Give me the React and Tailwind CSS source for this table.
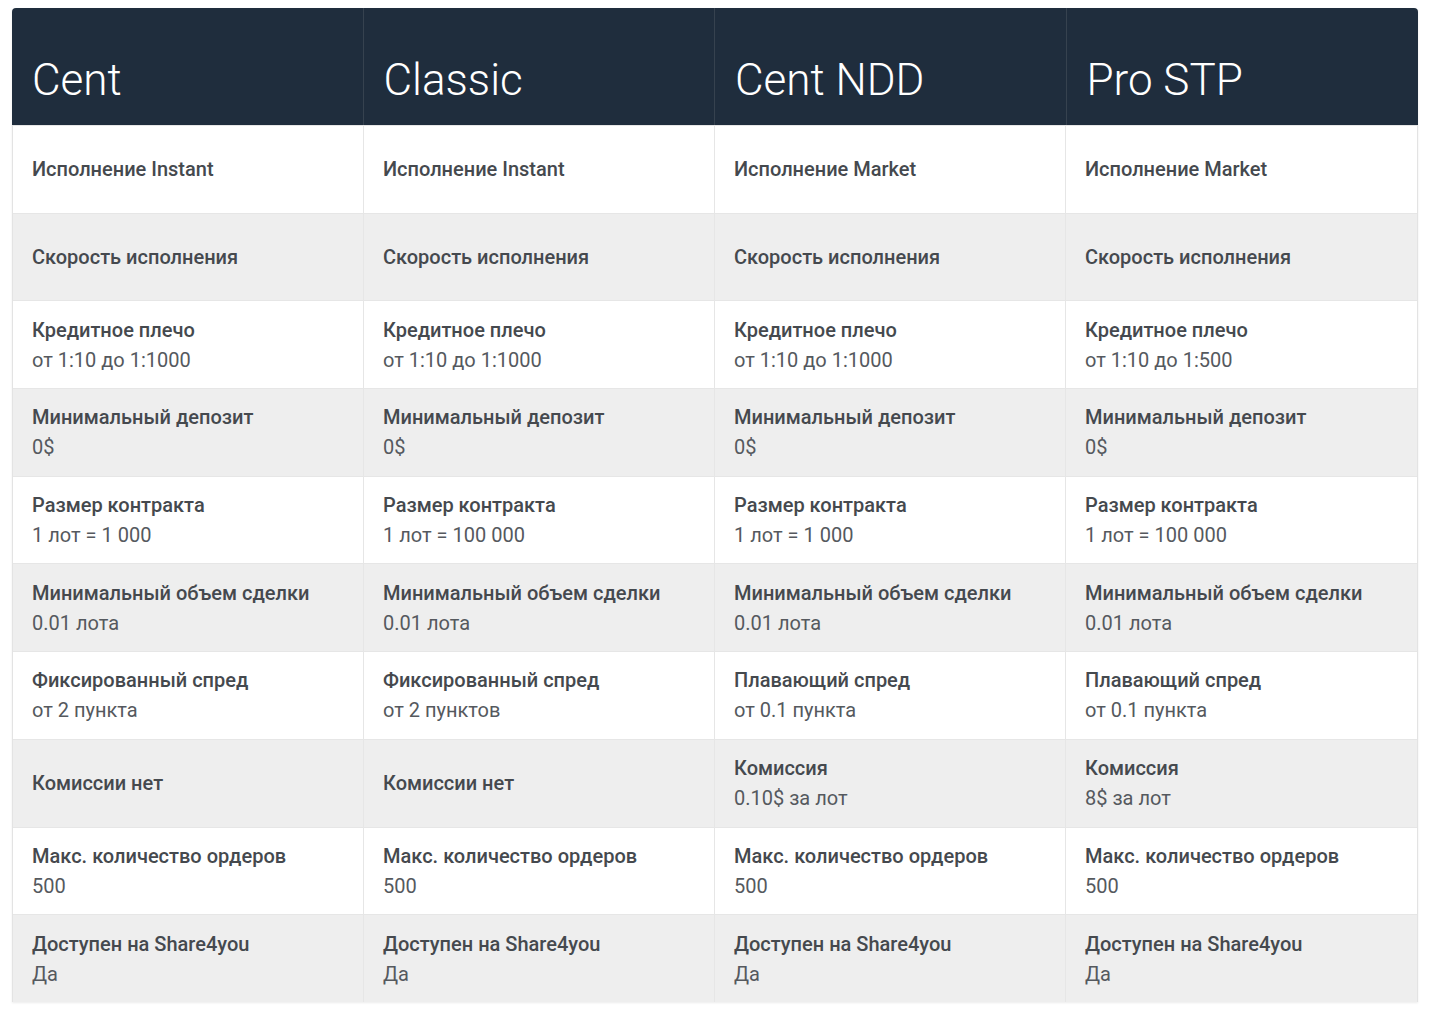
import React from "react";

const headers = ["Cent", "Classic", "Cent NDD", "Pro STP"];

const rows = [
  [["Исполнение Instant"], ["Исполнение Instant"], ["Исполнение Market"], ["Исполнение Market"]],
  [["Скорость исполнения"], ["Скорость исполнения"], ["Скорость исполнения"], ["Скорость исполнения"]],
  [["Кредитное плечо", "от 1:10 до 1:1000"], ["Кредитное плечо", "от 1:10 до 1:1000"], ["Кредитное плечо", "от 1:10 до 1:1000"], ["Кредитное плечо", "от 1:10 до 1:500"]],
  [["Минимальный депозит", "0$"], ["Минимальный депозит", "0$"], ["Минимальный депозит", "0$"], ["Минимальный депозит", "0$"]],
  [["Размер контракта", "1 лот = 1 000"], ["Размер контракта", "1 лот = 100 000"], ["Размер контракта", "1 лот = 1 000"], ["Размер контракта", "1 лот = 100 000"]],
  [["Минимальный объем сделки", "0.01 лота"], ["Минимальный объем сделки", "0.01 лота"], ["Минимальный объем сделки", "0.01 лота"], ["Минимальный объем сделки", "0.01 лота"]],
  [["Фиксированный спред", "от 2 пункта"], ["Фиксированный спред", "от 2 пунктов"], ["Плавающий спред", "от 0.1 пункта"], ["Плавающий спред", "от 0.1 пункта"]],
  [["Комиссии нет"], ["Комиссии нет"], ["Комиссия", "0.10$ за лот"], ["Комиссия", "8$ за лот"]],
  [["Макс. количество ордеров", "500"], ["Макс. количество ордеров", "500"], ["Макс. количество ордеров", "500"], ["Макс. количество ордеров", "500"]],
  [["Доступен на Share4you", "Да"], ["Доступен на Share4you", "Да"], ["Доступен на Share4you", "Да"], ["Доступен на Share4you", "Да"]],
];

export default function App() {
  return (
    <div className="min-h-[1012px] w-[1431px] bg-white pt-[8px] pl-[12px]" style={{ fontFamily: "Roboto, 'Noto Sans', sans-serif" }}>
      <div className="w-[1406px] shadow-[0_1px_2px_rgba(0,0,0,0.08)]">
        <div className="grid grid-cols-4 rounded-t-[4px] bg-[#1f2d3d] overflow-hidden">
          {headers.map((h, i) => (
            <div
              key={h}
              className={`h-[117px] pl-[20px] pt-[47px] text-[44px] leading-[50px] font-light text-white ${i < 3 ? "border-r border-[#36424f]" : ""}`}
            >
              {h}
            </div>
          ))}
        </div>
        <div className="border-x border-[#e3e3e3]">
          {rows.map((row, ri) => (
            <div
              key={ri}
              className={`grid grid-cols-4 h-[87.7px] border-t border-[#e6e6e6] ${ri % 2 === 1 ? "bg-[#eeeeee]" : "bg-white"}`}
            >
              {row.map((cell, ci) => (
                <div
                  key={ci}
                  className={`flex flex-col justify-center pl-[19px] text-[20px] leading-[30px] ${ci < 3 ? "border-r border-[#e6e6e6]" : ""}`}
                >
                  <div className="font-medium text-[#45494e]">{cell[0]}</div>
                  {cell[1] && <div className="text-[#55595e]">{cell[1]}</div>}
                </div>
              ))}
            </div>
          ))}
        </div>
      </div>
    </div>
  );
}
